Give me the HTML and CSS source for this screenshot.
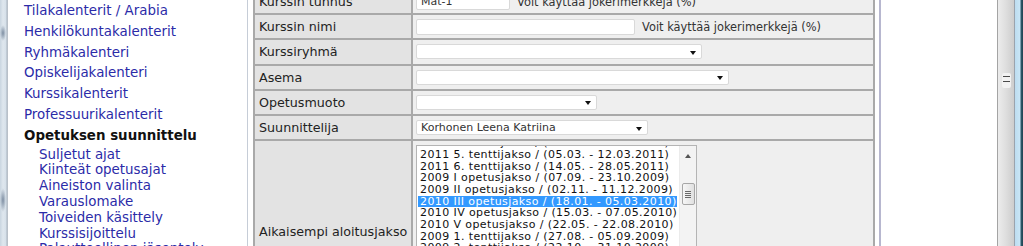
FILE: index.html
```html
<!DOCTYPE html>
<html lang="fi">
<head>
<meta charset="utf-8">
<title>Opetuksen suunnittelu</title>
<link rel="stylesheet" href="styles.css">
</head>
<body>
<div class="win-left"></div>
<nav class="menu">
  <a class="item">Tilakalenterit / Arabia</a>
  <a class="item">Henkilökuntakalenterit</a>
  <a class="item">Ryhmäkalenteri</a>
  <a class="item">Opiskelijakalenteri</a>
  <a class="item">Kurssikalenterit</a>
  <a class="item">Professuurikalenterit</a>
  <div class="head">Opetuksen suunnittelu</div>
  <a class="sub">Suljetut ajat</a>
  <a class="sub">Kiinteät opetusajat</a>
  <a class="sub">Aineiston valinta</a>
  <a class="sub">Varauslomake</a>
  <a class="sub">Toiveiden käsittely</a>
  <a class="sub">Kurssisijoittelu</a>
  <a class="sub">Palautteellinen jäsentely</a>
</nav>
<main class="content">
  <div class="panel">
    <div class="form">
      <div class="label">Kurssin tunnus</div>
      <div class="field"><span class="input w-tunnus">Mat-1</span><span class="hint">Voit käyttää jokerimerkkejä (%)</span></div>

      <div class="label">Kurssin nimi</div>
      <div class="field"><span class="input w-nimi"></span><span class="hint">Voit käyttää jokerimerkkejä (%)</span></div>

      <div class="label">Kurssiryhmä</div>
      <div class="field"><span class="select w-ryhma"><span class="value"></span><span class="arrow"></span></span></div>

      <div class="label">Asema</div>
      <div class="field"><span class="select w-asema"><span class="value"></span><span class="arrow"></span></span></div>

      <div class="label">Opetusmuoto</div>
      <div class="field"><span class="select w-muoto"><span class="value"></span><span class="arrow"></span></span></div>

      <div class="label">Suunnittelija</div>
      <div class="field"><span class="select w-suun"><span class="value">Korhonen Leena Katriina</span><span class="arrow"></span></span></div>

      <div class="label">Aikaisempi aloitusjakso</div>
      <div class="field field-top">
        <div class="listbox">
          <div class="options">
            <div class="opt first">2011 4. tenttijakso / (05.02. - 12.02.2011)</div>
            <div class="opt">2011 5. tenttijakso / (05.03. - 12.03.2011)</div>
            <div class="opt">2011 6. tenttijakso / (14.05. - 28.05.2011)</div>
            <div class="opt">2009 I opetusjakso / (07.09. - 23.10.2009)</div>
            <div class="opt">2009 II opetusjakso / (02.11. - 11.12.2009)</div>
            <div class="opt sel">2010 III opetusjakso / (18.01. - 05.03.2010)</div>
            <div class="opt">2010 IV opetusjakso / (15.03. - 07.05.2010)</div>
            <div class="opt">2010 V opetusjakso / (22.05. - 22.08.2010)</div>
            <div class="opt">2009 1. tenttijakso / (27.08. - 05.09.2009)</div>
            <div class="opt">2009 2. tenttijakso / (22.10. - 31.10.2009)</div>
            <div class="opt">2009 3. tenttijakso / (10.12. - 19.12.2009)</div>
            <div class="opt">2010 1. tenttijakso / (11.03. - 20.03.2010)</div>
            <div class="opt">2010 2. tenttijakso / (06.05. - 15.05.2010)</div>
            <div class="opt">2010 3. tenttijakso / (26.08. - 04.09.2010)</div>
            <div class="opt">2010 4. tenttijakso / (21.10. - 30.10.2010)</div>
          </div>
          <div class="lb-scroll">
            <span class="lb-btn"><span class="up"></span></span>
            <span class="lb-thumb"><span class="lb-grip"></span></span>
          </div>
        </div>
      </div>
    </div>
  </div>
</main>
<div class="vscroll"><span class="grip"></span></div>
<div class="win-right"></div>
</body>
</html>
```

FILE: styles.css
```css
html, body {
  margin: 0;
  padding: 0;
}
body {
  height: 246px;
  overflow: hidden;
  display: flex;
  background: #ffffff;
  font-family: "DejaVu Sans", Verdana, sans-serif;
}

/* window frame */
.win-left {
  width: 8px;
  flex: none;
  background:
    radial-gradient(ellipse 3px 8px at 3px 33px, rgba(90,110,135,0.75), rgba(90,110,135,0) 100%),
    radial-gradient(ellipse 3px 12px at 3px 200px, rgba(90,110,135,0.75), rgba(90,110,135,0) 100%),
    linear-gradient(to right, #c9d5e0 0, #dfe7ee 3px, #d6e0e9 6px, #aab5c0 7px, #c8ccd2 8px);
}
.win-right {
  width: 9px;
  flex: none;
  background: linear-gradient(to right, #9aa3ad 0, #9aa3ad 1px, #bcdcf0 1px, #c9e6f6 6px, #2d5a6a 7px, #1f4452 9px);
}

/* left menu */
.menu {
  width: 238px;
  flex: none;
  box-sizing: border-box;
  padding: 1px 0 0 16px;
  font-size: 13.4px;
}
.menu .item,
.menu .sub {
  display: block;
  color: #2b2ba8;
  text-decoration: none;
  white-space: nowrap;
}
.menu .item {
  line-height: 20.8px;
}
.menu .head {
  font-weight: bold;
  color: #111111;
  line-height: 20.8px;
}
.menu .sub {
  padding-left: 15px;
  line-height: 15.8px;
}

/* content */
.content {
  flex: 1;
  display: flex;
  align-items: flex-start;
}
.panel {
  margin-left: 1px;
  border-left: 1px solid #c6cdd7;
  border-right: 2px solid #b7b7cf;
  padding: 0 4px 0 5px;
  align-self: stretch;
}
.form {
  margin-top: -12px;
  display: grid;
  grid-template-columns: 156px 460px;
  grid-template-rows: repeat(6, 23.2px) auto;
  gap: 2px;
  border: 2px solid #a9a9a9;
  background: #a9a9a9;
}
.label {
  background: #e3e3e3;
  padding-left: 4px;
  display: flex;
  align-items: center;
  font-size: 12.7px;
  color: #222222;
  white-space: nowrap;
}
.field {
  background: #efefef;
  padding-left: 3px;
  display: flex;
  align-items: center;
  gap: 6px;
  font-size: 11.4px;
  color: #333333;
  white-space: nowrap;
}
.field-top {
  align-items: flex-start;
  padding-top: 4px;
  padding-bottom: 4px;
}
.input,
.select {
  box-sizing: border-box;
  height: 16px;
  background: #ffffff;
  border: 1px solid #d9d9d9;
  border-radius: 2px;
  font-size: 11px;
  color: #333333;
  line-height: 14px;
  padding-left: 4px;
}
.select {
  height: 15px;
  display: flex;
  align-items: center;
  justify-content: space-between;
  padding-right: 5px;
}
.w-tunnus { width: 94px; }
.w-nimi { width: 219px; }
.w-ryhma { width: 286px; }
.w-asema { width: 313px; }
.w-muoto { width: 181px; }
.w-suun { width: 232px; }
.hint {
  padding-left: 1px;
}
.arrow {
  width: 0;
  height: 0;
  border-left: 3.5px solid transparent;
  border-right: 3.5px solid transparent;
  border-top: 4px solid #111111;
  margin-top: 2px;
}

/* listbox */
.listbox {
  width: 281px;
  height: 172px;
  box-sizing: border-box;
  border: 1px solid #b4b4b4;
  background: #ffffff;
  display: flex;
}
.options {
  flex: 1;
  overflow: hidden;
  padding: 0 2px 0 1px;
}
.opt {
  height: 11.66px;
  line-height: 11.66px;
  font-size: 11px;
  letter-spacing: 0.4px;
  padding-left: 2px;
  color: #111111;
  white-space: nowrap;
}
.opt.first {
  margin-top: -8.8px;
}
.opt.sel {
  background: #3399ff;
  color: #ffffff;
}
.lb-scroll {
  width: 16px;
  flex: none;
  background: #f3f3f3;
  border-left: 1px solid #ebebeb;
  display: flex;
  flex-direction: column;
  align-items: center;
}
.lb-btn {
  height: 20px;
  display: flex;
  align-items: center;
  justify-content: center;
}
.up {
  width: 0;
  height: 0;
  border-left: 3px solid transparent;
  border-right: 3px solid transparent;
  border-bottom: 4px solid #555555;
}
.lb-thumb {
  margin-top: 17px;
  width: 13px;
  height: 22px;
  box-sizing: border-box;
  border: 1px solid #a7a7a7;
  border-radius: 2px;
  background: linear-gradient(to right, #f7f7f7, #e0e0e0);
  display: flex;
  align-items: center;
  justify-content: center;
}
.lb-grip {
  width: 6px;
  height: 7px;
  background: repeating-linear-gradient(to bottom, #6a6a6a 0, #6a6a6a 1px, transparent 1px, transparent 2px);
}

/* main scrollbar */
.vscroll {
  width: 17px;
  flex: none;
  box-sizing: border-box;
  border-left: 1px solid #a4a4a4;
  background: linear-gradient(to right, #ececec, #dedede 50%, #cdcdcd);
  display: flex;
  justify-content: center;
}
.grip {
  margin-top: 73px;
  width: 9px;
  height: 15px;
  border-radius: 2px;
  background:
    repeating-linear-gradient(to bottom, transparent 0, transparent 3px, #4a4a4a 3px, #4a4a4a 4px, transparent 4px, transparent 5px) 1px 0 / 7px 12px no-repeat,
    #f2f2f2;
}
```
